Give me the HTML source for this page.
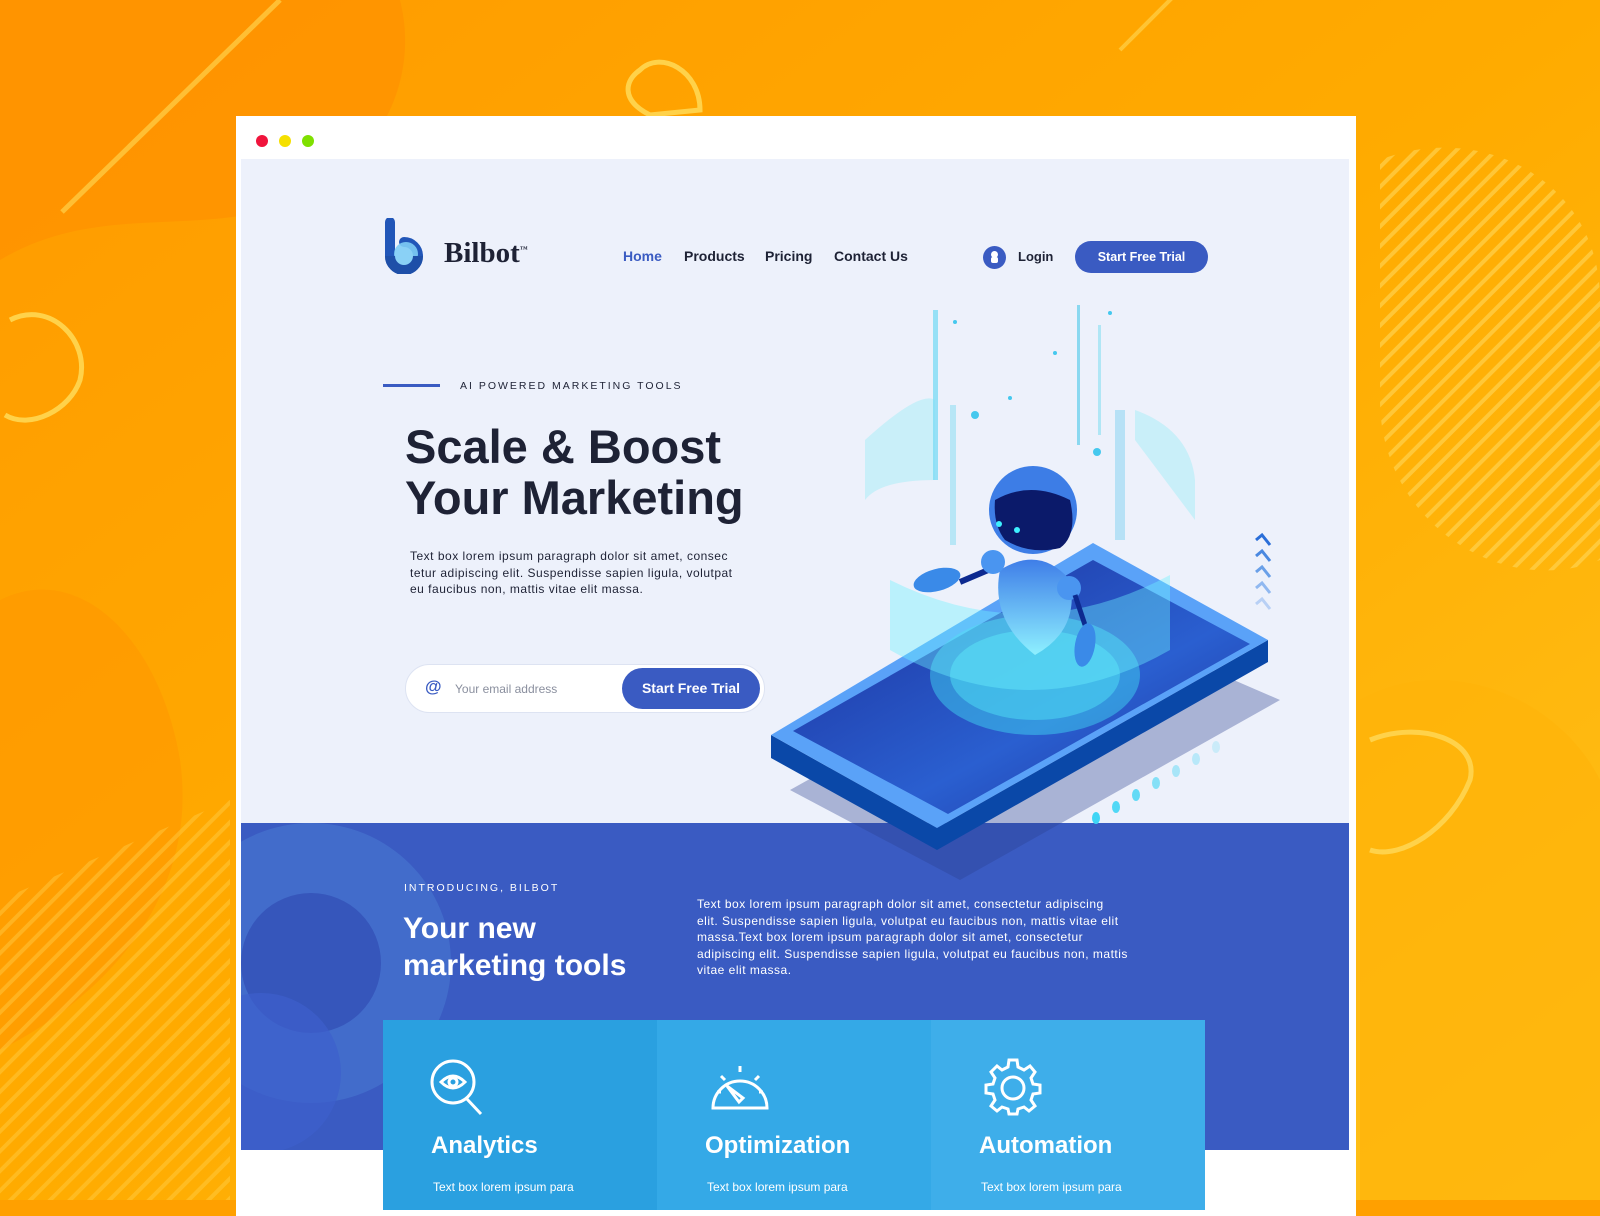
<!DOCTYPE html>
<html><head><meta charset="utf-8"><style>
*{margin:0;padding:0;box-sizing:border-box}
body{width:1600px;height:1200px;overflow:hidden;position:relative;font-family:"Liberation Sans",sans-serif;background:#ffa000}
.abs{position:absolute}
.win{left:236px;top:116px;width:1120px;height:1100px;background:#fff}
.page{left:241px;top:159px;width:1108px;height:664px;background:#edf1fb}
.nav a{position:absolute;font-size:14px;font-weight:bold;color:#1e2235;top:248px}
.blue{left:241px;top:823px;width:1108px;height:327px;background:#3a5bc2;overflow:hidden}
.card{position:absolute;top:1020px;width:274px;height:190px;color:#fff}
.card h3{position:absolute;left:48px;top:112px;font-size:24px;font-weight:bold}
.card p{position:absolute;left:50px;top:160px;font-size:12px}
</style></head><body>
<svg class="abs" style="left:0;top:0" width="1600" height="1200">
<defs><linearGradient id="bg" x1="0" y1="0" x2="1" y2="1"><stop offset="0" stop-color="#ff9a00"/><stop offset="0.5" stop-color="#ffab00"/><stop offset="1" stop-color="#ffc21a"/></linearGradient>
<pattern id="st" width="14" height="14" patternUnits="userSpaceOnUse" patternTransform="rotate(45)"><rect width="4" height="14" fill="#ffd75a" opacity=".6"/></pattern></defs>
<rect width="1600" height="1200" fill="url(#bg)"/>
<path d="M0 0H400C420 80 380 160 300 200 200 240 100 200 0 260Z" fill="#ff9200" opacity=".8"/>
<path d="M0 600C80 560 160 640 180 760 200 900 100 1000 0 1050Z" fill="#ff9800" opacity=".6"/>
<path d="M1380 160C1480 120 1600 180 1600 300V560C1500 600 1380 520 1380 400Z" fill="url(#st)"/>
<path d="M0 900L230 800V1200H0Z" fill="url(#st)" opacity=".6"/>
<path d="M1360 700C1450 650 1560 700 1600 780V1200H1360Z" fill="#ffb30a" opacity=".7"/>
<path d="M62 212L280 0" stroke="#ffd24a" stroke-width="5" opacity=".7"/>
<path d="M1120 50L1180 -10" stroke="#ffd24a" stroke-width="4" opacity=".7"/>
<path d="M640 70C660 50 700 70 700 110L650 115C620 100 625 80 640 70Z" fill="none" stroke="#ffd24a" stroke-width="5"/>
<path d="M10 320C50 300 90 340 80 380 70 410 30 430 5 415" fill="none" stroke="#ffd24a" stroke-width="5"/>
<path d="M1370 740C1420 720 1480 740 1470 780 1450 830 1400 860 1370 850" fill="none" stroke="#ffd24a" stroke-width="5"/>
</svg>
<div class="abs win"></div>
<div class="abs" style="left:256px;top:135px;width:12px;height:12px;border-radius:50%;background:#f0143c"></div>
<div class="abs" style="left:279px;top:135px;width:12px;height:12px;border-radius:50%;background:#f5e000"></div>
<div class="abs" style="left:302px;top:135px;width:12px;height:12px;border-radius:50%;background:#7fe000"></div>
<div class="abs page"></div>
<svg class="abs" style="left:383px;top:218px" width="50" height="56"><path d="M7 4V38A14 14 0 1 0 21 24" fill="none" stroke="#2156b8" stroke-width="10" stroke-linecap="round"/><circle cx="23" cy="36" r="12" fill="#7ecdf5" opacity=".9"/><path d="M7 38A14 14 0 0 0 35 38" fill="none" stroke="#1e4fa8" stroke-width="10"/></svg>
<div class="abs" style="left:444px;top:237px;font-family:'Liberation Serif',serif;font-weight:bold;font-size:29px;color:#1e2235">Bilbot<sup style="font-size:8px">™</sup></div>
<div class="nav"><a style="left:623px;color:#3a5bc2">Home</a><a style="left:684px">Products</a><a style="left:765px">Pricing</a><a style="left:834px">Contact Us</a></div>
<div class="abs" style="left:983px;top:246px;width:23px;height:23px;border-radius:50%;background:#3a5bc2"><div style="position:absolute;left:8px;top:5px;width:7px;height:7px;border-radius:50%;background:#fff"></div><div style="position:absolute;left:8px;top:11px;width:7px;height:6px;background:#fff;border-radius:2px"></div></div>
<div class="abs" style="left:1018px;top:249px;font-size:13px;font-weight:bold;color:#1e2235">Login</div>
<div class="abs" style="left:1075px;top:241px;width:133px;height:32px;border-radius:16px;background:#3a5bc2;color:#fff;font-size:12.5px;font-weight:bold;text-align:center;line-height:32px">Start Free Trial</div>
<div class="abs" style="left:383px;top:384px;width:57px;height:3px;background:#3a5bc2"></div>
<div class="abs" style="left:460px;top:380px;font-size:10.5px;letter-spacing:2px;color:#1e2235">AI POWERED MARKETING TOOLS</div>
<div class="abs" style="left:405px;top:421px;font-size:47px;font-weight:bold;color:#1e2235;line-height:51px">Scale &amp; Boost<br>Your Marketing</div>
<div class="abs" style="left:410px;top:548px;font-size:12px;letter-spacing:.5px;color:#1e2235;line-height:16.5px;white-space:nowrap">Text box lorem ipsum paragraph dolor sit amet, consec<br>tetur adipiscing elit. Suspendisse sapien ligula, volutpat<br>eu faucibus non, mattis vitae elit massa.</div>
<div class="abs" style="left:405px;top:664px;width:360px;height:49px;border-radius:25px;background:#fff;border:1px solid #dde3f2"></div>
<div class="abs" style="left:425px;top:677px;font-size:17px;font-weight:bold;color:#3a5bc2">@</div>
<div class="abs" style="left:455px;top:682px;font-size:12px;color:#8a8f9e">Your email address</div>
<div class="abs" style="left:622px;top:668px;width:138px;height:41px;border-radius:21px;background:#3a5bc2;color:#fff;font-size:14px;font-weight:bold;text-align:center;line-height:41px">Start Free Trial</div>
<div class="abs blue">
<svg width="1108" height="327"><circle cx="70" cy="140" r="140" fill="#4673cf" opacity=".7"/><circle cx="70" cy="140" r="70" fill="#3656bb"/><circle cx="20" cy="250" r="80" fill="#3d60cc" opacity=".7"/></svg>
</div>
<svg class="abs" style="left:0;top:0" width="1600" height="1200">
<defs><linearGradient id="scr" x1="0" y1="0" x2="1" y2="1"><stop offset="0" stop-color="#1c2f9a"/><stop offset=".6" stop-color="#2a5fd0"/><stop offset="1" stop-color="#1a2f9a"/></linearGradient>
<linearGradient id="rb" x1="0" y1="0" x2="0" y2="1"><stop offset="0" stop-color="#3f7ee8"/><stop offset="1" stop-color="#8ef0ff"/></linearGradient></defs>
<path d="M790 790L1095 620 1280 700 960 880Z" fill="#2b3f8f" opacity=".35"/>
<path d="M771 735V758L937 850 1268 662V640L937 828Z" fill="#0a48a8"/>
<path d="M771 735L1093 543 1268 640 937 828Z" fill="#5aa2f8"/>
<path d="M793 731L1093 560 1250 644 948 814Z" fill="url(#scr)"/>
<ellipse cx="1035" cy="675" rx="105" ry="60" fill="#3fd0f0" opacity=".5"/>
<ellipse cx="1035" cy="675" rx="85" ry="45" fill="#4fe0f5" opacity=".5"/>
<path d="M890 580Q1030 650 1170 575V650Q1030 730 890 650Z" fill="#6ff3ff" opacity=".4"/>
<path d="M865 440Q920 390 935 400V480Q880 480 865 500Z" fill="#a6eef8" opacity=".5"/>
<path d="M1135 410Q1190 430 1195 480V520L1135 440Z" fill="#a6eef8" opacity=".5"/>
<rect x="933" y="310" width="5" height="170" fill="#7fdcf5" opacity=".8"/><rect x="950" y="405" width="6" height="140" fill="#a9e4f5" opacity=".8"/><rect x="1077" y="305" width="3" height="140" fill="#8ad8f0"/><rect x="1098" y="325" width="3" height="110" fill="#b0e6f5"/><rect x="1115" y="410" width="10" height="130" fill="#a9ddf5" opacity=".8"/>
<circle cx="955" cy="322" r="2" fill="#45c8ee"/><circle cx="975" cy="415" r="4" fill="#45c8ee"/><circle cx="1010" cy="398" r="2" fill="#45c8ee"/><circle cx="1097" cy="452" r="4" fill="#45c8ee"/><circle cx="1055" cy="353" r="2" fill="#45c8ee"/><circle cx="1110" cy="313" r="2" fill="#45c8ee"/>
<path d="M1000 565L960 582" stroke="#0d2a90" stroke-width="6"/>
<ellipse cx="937" cy="580" rx="24" ry="11" fill="#3a8ae8" transform="rotate(-15 937 580)"/>
<path d="M1000 570Q1040 545 1070 580Q1080 630 1035 655Q990 620 1000 570Z" fill="url(#rb)"/>
<circle cx="993" cy="562" r="12" fill="#4a95f0"/><circle cx="1069" cy="588" r="12" fill="#4a95f0"/>
<path d="M1075 595L1085 625" stroke="#0d2a90" stroke-width="5"/><ellipse cx="1085" cy="645" rx="10" ry="22" fill="#3a8ae8" transform="rotate(10 1085 645)"/>
<circle cx="1033" cy="510" r="44" fill="#3d7de6"/>
<path d="M995 500Q1030 480 1070 500Q1078 535 1060 548Q1030 555 1005 540Q993 525 995 500Z" fill="#0b1a6a"/>
<circle cx="999" cy="524" r="3" fill="#3ef0ff"/><circle cx="1017" cy="530" r="3" fill="#3ef0ff"/>
<g fill="#3fd5f5"><ellipse cx="1096" cy="818" rx="4" ry="6"/><ellipse cx="1116" cy="807" rx="4" ry="6" opacity=".9"/><ellipse cx="1136" cy="795" rx="4" ry="6" opacity=".8"/><ellipse cx="1156" cy="783" rx="4" ry="6" opacity=".6"/><ellipse cx="1176" cy="771" rx="4" ry="6" opacity=".4"/><ellipse cx="1196" cy="759" rx="4" ry="6" opacity=".3"/><ellipse cx="1216" cy="747" rx="4" ry="6" opacity=".2"/></g>
<g fill="none" stroke-width="3"><path d="M1256 540L1262 535 1270 545" stroke="#2a6ed8"/><path d="M1256 556L1262 551 1270 561" stroke="#4a88e0"/><path d="M1256 572L1262 567 1270 577" stroke="#6aa0e8"/><path d="M1256 588L1262 583 1270 593" stroke="#90b8f0"/><path d="M1256 604L1262 599 1270 609" stroke="#b8d0f5"/></g>
</svg>
<div class="abs" style="left:404px;top:882px;font-size:10.5px;letter-spacing:2px;color:#fff">INTRODUCING, BILBOT</div>
<div class="abs" style="left:403px;top:910px;font-size:30px;font-weight:bold;color:#fff;line-height:37px">Your new<br>marketing tools</div>
<div class="abs" style="left:697px;top:896px;font-size:12px;letter-spacing:.5px;color:#fff;line-height:16.5px;white-space:nowrap">Text box lorem ipsum paragraph dolor sit amet, consectetur adipiscing<br>elit. Suspendisse sapien ligula, volutpat eu faucibus non, mattis vitae elit<br>massa.Text box lorem ipsum paragraph dolor sit amet, consectetur<br>adipiscing elit. Suspendisse sapien ligula, volutpat eu faucibus non, mattis<br>vitae elit massa.</div>
<div class="card" style="left:383px;background:#2aa0e0">
<svg class="abs" style="left:46px;top:38px" width="60" height="60" fill="none" stroke="#fff" stroke-width="3"><circle cx="24" cy="24" r="21"/><path d="M37 40L52 56"/><path d="M12 24Q24 12 36 24Q24 36 12 24Z"/><circle cx="24" cy="24" r="4"/></svg>
<h3>Analytics</h3><p>Text box lorem ipsum para</p></div>
<div class="card" style="left:657px;background:#34a9e7">
<svg class="abs" style="left:50px;top:38px" width="66" height="58" fill="none" stroke="#fff" stroke-width="3"><path d="M6 50A27 27 0 1 1 60 50Z"/><path d="M33 8V14M14 18L18 22M52 18L48 22M10 34H14M56 34H52"/><path d="M20 28L36 40 32 44Z"/></svg>
<h3>Optimization</h3><p>Text box lorem ipsum para</p></div>
<div class="card" style="left:931px;background:#3eaeea">
<svg class="abs" style="left:52px;top:36px" width="60" height="60" fill="none" stroke="#fff" stroke-width="3"><path d="M26 4H34L35 11 41 14 47 10 52 16 48 22 50 28 57 29V37L50 38 48 44 52 50 46 55 41 51 35 53 34 58H26L25 53 19 51 14 55 8 50 12 44 10 38 3 37V29L10 28 12 22 8 16 14 10 19 14 25 11Z"/><circle cx="30" cy="32" r="11"/></svg>
<h3>Automation</h3><p>Text box lorem ipsum para</p></div>
</body></html>
